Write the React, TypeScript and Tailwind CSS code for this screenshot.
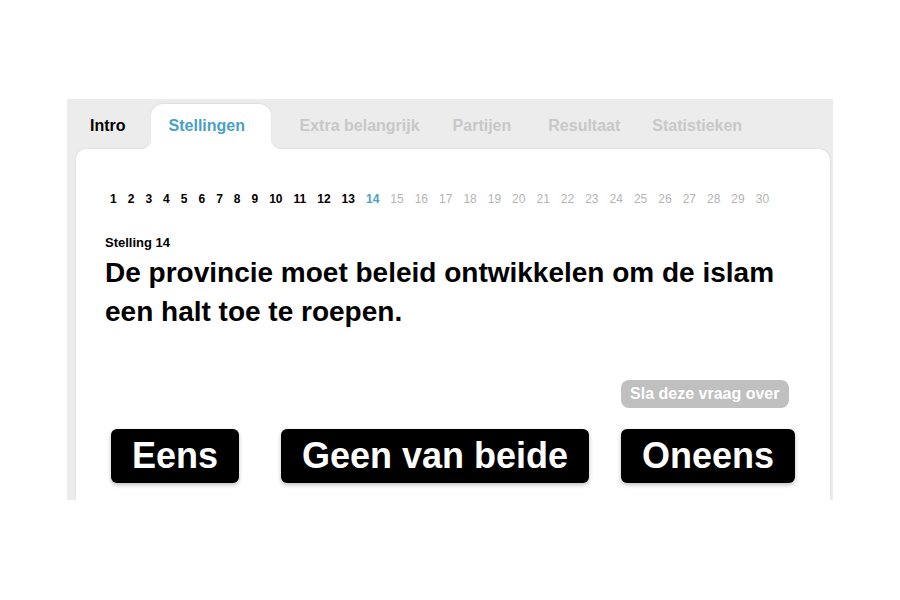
export default function App() {
  const done = Array.from({ length: 13 }, (_, i) => i + 1)
  const todo = Array.from({ length: 16 }, (_, i) => i + 15)

  return (
    <div className="w-[900px] h-[600px] bg-white pt-[99px] pl-[67px] font-['Liberation_Sans',Arial,sans-serif]">
      <div className="w-[766px] h-[401px] bg-[#ececec] pl-[9px] pr-[3px] flex flex-col overflow-hidden">
        {/* tabs */}
        <div className="h-[50px] flex items-end text-[16px] font-bold shrink-0">
          <div className="h-[45px] pt-[10px] ml-[14px] text-black">Intro</div>
          <div className="h-[45px] w-[120px] ml-[25px] pl-[18px] pt-[10px] bg-white rounded-t-[12px] text-[#4a9fc6] shadow-[0_-1px_2px_rgba(0,0,0,0.06)] relative z-10 before:content-[''] before:absolute before:bottom-0 before:-left-[10px] before:w-[10px] before:h-[10px] before:bg-[radial-gradient(circle_at_0_0,transparent_10px,white_10.5px)] after:content-[''] after:absolute after:bottom-0 after:-right-[10px] after:w-[10px] after:h-[10px] after:bg-[radial-gradient(circle_at_100%_0,transparent_10px,white_10.5px)]">
            Stellingen
          </div>
          <div className="h-[45px] pt-[10px] ml-[29px] text-[#c8c8c8]">Extra belangrijk</div>
          <div className="h-[45px] pt-[10px] ml-[33px] text-[#c8c8c8]">Partijen</div>
          <div className="h-[45px] pt-[10px] ml-[37px] text-[#c8c8c8]">Resultaat</div>
          <div className="h-[45px] pt-[10px] ml-[32px] text-[#c8c8c8]">Statistieken</div>
        </div>

        {/* card */}
        <div className="flex-1 bg-white rounded-tr-[12px] rounded-tl-[10px] shadow-[0_0_3px_rgba(0,0,0,0.08)] pl-[29px]">
          <div className="flex gap-[11px] text-[12px] pl-[5px] pt-[42px] leading-[16px]">
            {done.map((n) => (
              <span key={n} className="font-bold text-black">{n}</span>
            ))}
            <span className="font-bold text-[#4a9fc6]">14</span>
            {todo.map((n) => (
              <span key={n} className="text-[#b4b4b4]">{n}</span>
            ))}
          </div>

          <div className="mt-[29px] text-[13px] font-bold leading-[14px] text-black">Stelling 14</div>
          <h1 className="mt-[3px] text-[28px] font-bold leading-[39px] text-black w-[690px]">
            De provincie moet beleid ontwikkelen om de islam een halt toe te roepen.
          </h1>

          <div className="flex justify-end w-[684px] mt-[49px]">
            <button className="h-[28px] px-[9.5px] rounded-[8px] bg-[#c0c0c0] text-white text-[16px] font-bold">
              Sla deze vraag over
            </button>
          </div>

          <div className="flex mt-[21px] ml-[6px]">
            <button className="h-[54px] w-[128px] rounded-[6px] bg-black text-white text-[36px] font-bold shadow-[0_2px_4px_rgba(0,0,0,0.25)]">
              Eens
            </button>
            <button className="h-[54px] w-[308px] ml-[42px] rounded-[6px] bg-black text-white text-[36px] font-bold shadow-[0_2px_4px_rgba(0,0,0,0.25)]">
              Geen van beide
            </button>
            <button className="h-[54px] w-[174px] ml-[32px] rounded-[6px] bg-black text-white text-[36px] font-bold shadow-[0_2px_4px_rgba(0,0,0,0.25)]">
              Oneens
            </button>
          </div>
        </div>
      </div>
    </div>
  )
}
